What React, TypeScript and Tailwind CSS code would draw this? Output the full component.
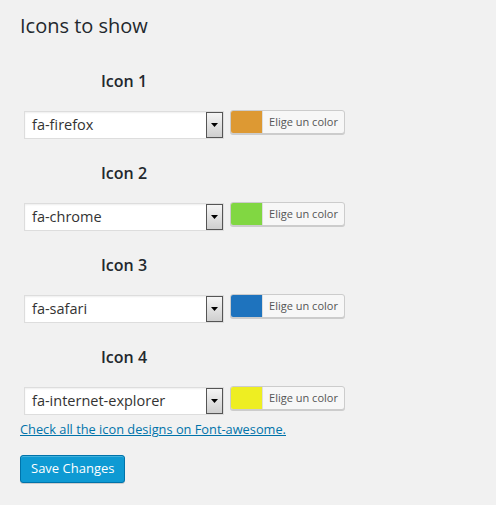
import React from 'react';

interface IconRow {
  label: string;
  value: string;
  color: string;
}

const rows: IconRow[] = [
  { label: 'Icon 1', value: 'fa-firefox', color: '#dd9933' },
  { label: 'Icon 2', value: 'fa-chrome', color: '#81d742' },
  { label: 'Icon 3', value: 'fa-safari', color: '#1e73be' },
  { label: 'Icon 4', value: 'fa-internet-explorer', color: '#eeee22' },
];

const FakeSelect = ({ value }: { value: string }) => (
  <div className="relative flex h-[28px] w-[200px] items-center border border-[#dddddd] bg-white pl-[7px] text-[14.5px] text-[#333] shadow-[inset_0_1px_2px_rgba(0,0,0,0.07)]">
    {value}
    <div className="absolute right-0 top-0 flex h-[26px] w-[17px] items-center justify-center border border-[#555] bg-gradient-to-b from-[#f5f5f5] to-[#cfcfcf]">
      <svg width="7" height="4" viewBox="0 0 7 4">
        <path d="M0 0h7L3.5 4z" fill="#000" />
      </svg>
    </div>
  </div>
);

const ColorButton = ({ color }: { color: string }) => (
  <div className="-mt-[1px] flex h-[24px] w-[115px] items-stretch overflow-hidden rounded-[3px] border border-[#cccccc] bg-[#f7f7f7] shadow-[0_1px_0_#ccc]">
    <span className="w-[31px]" style={{ backgroundColor: color }} />
    <span className="flex flex-1 items-center justify-center border-l border-[#dddddd] text-[11px] text-[#555]">
      Elige un color
    </span>
  </div>
);

export default function App() {
  return (
    <div className="min-h-screen bg-[#f1f1f1] px-[20px] pt-[10px] font-['Open_Sans',sans-serif] text-[#23282d]">
      <h2 className="text-[20px] leading-[31px]">Icons to show</h2>

      <div className="mt-[28px] flex flex-col">
        {rows.map((row) => (
          <div key={row.label} className="mb-[22px] flex flex-col pl-[4px] last:mb-0">
            <div className="w-[200px] text-center text-[16px] font-semibold leading-[24px]">{row.label}</div>
            <div className="mt-[18px] flex items-start gap-[6px]">
              <FakeSelect value={row.value} />
              <ColorButton color={row.color} />
            </div>
          </div>
        ))}
      </div>

      <a href="#" className="mt-[4px] block text-[12.8px] leading-[20px] text-[#0073aa] underline">
        Check all the icon designs on Font-awesome.
      </a>

      <button className="mt-[16px] h-[28px] rounded-[3px] border border-[#0073aa] bg-[#0e9ad3] px-[10px] text-[13px] text-white shadow-[inset_0_1px_0_rgba(120,200,230,0.5),0_1px_0_rgba(0,0,0,0.15)]">
        Save Changes
      </button>
    </div>
  );
}
